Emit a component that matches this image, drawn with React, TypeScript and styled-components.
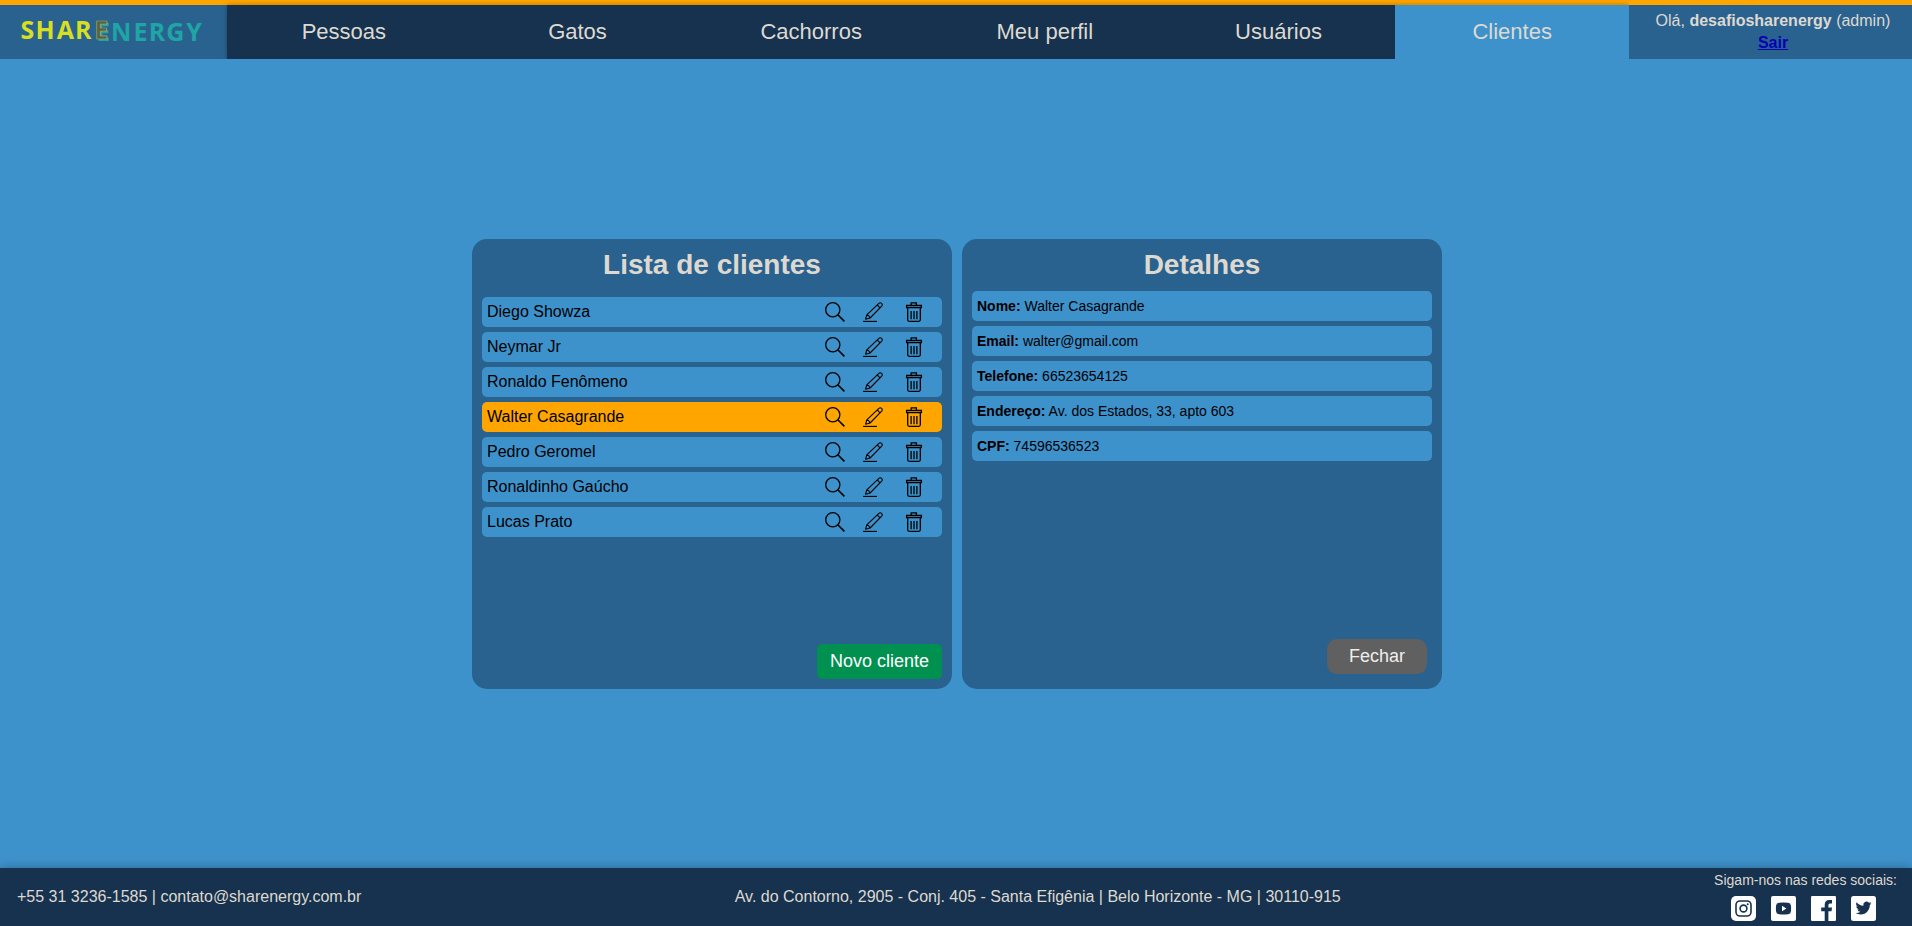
import React from "react";
import styled, { createGlobalStyle } from "styled-components";

const colors = {
  sky: "#3e92cc",
  steel: "#2a628f",
  navy: "#16324f",
  orange: "#ffa500",
  sand: "#ded9d0",
};

const GlobalStyle = createGlobalStyle`
  * { box-sizing: border-box; }
  body {
    margin: 0;
    background: ${colors.sky};
    font-family: "Liberation Sans", Arial, sans-serif;
    font-size: 16px;
    color: #000;
  }
`;

const Page = styled.div`
  display: flex;
  flex-direction: column;
  height: 100vh;
  overflow: hidden;
`;

const Header = styled.header`
  display: flex;
  height: 59px;
  flex: none;
  border-top: 5px solid ${colors.orange};
  color: ${colors.sand};
`;

const LogoBox = styled.div`
  width: 227px;
  background: ${colors.steel};
`;

const Nav = styled.nav`
  flex: 1;
  display: flex;
  background: ${colors.navy};
  box-shadow: 0 0 5px rgba(0, 0, 0, 0.3);
  clip-path: inset(-5px 0 0 -5px);
`;

const NavItem = styled.a<{ $active?: boolean }>`
  flex: 1;
  display: flex;
  align-items: center;
  justify-content: center;
  font-size: 22px;
  background: ${(p) => (p.$active ? colors.sky : "transparent")};
`;

const UserBox = styled.div`
  width: 283px;
  background: ${colors.steel};
  display: flex;
  flex-direction: column;
  align-items: center;
  padding: 5px 0 0 5px;
  line-height: 22px;
`;

const Logout = styled.a`
  color: #0000b4;
  font-weight: bold;
  text-decoration: underline;
`;

const Main = styled.main`
  flex: 1;
  display: flex;
  align-items: center;
  justify-content: center;
  gap: 10px;
  padding: 1px 0 0 2px;
`;

const Panel = styled.section`
  width: 480px;
  height: 450px;
  padding: 10px;
  border-radius: 15px;
  background: ${colors.steel};
  display: flex;
  flex-direction: column;
`;

const Title = styled.h2<{ $gap: number }>`
  margin: 0 0 ${(p) => p.$gap}px;
  height: 32px;
  line-height: 32px;
  font-size: 28px;
  text-align: center;
  color: ${colors.sand};
`;

const List = styled.ul`
  list-style: none;
  margin: 0;
  padding: 0;
  flex: 1;
  display: flex;
  flex-direction: column;
  gap: 5px;
`;

const ClientRow = styled.li<{ $selected?: boolean }>`
  height: 30px;
  padding: 0 18px 0 5px;
  border-radius: 5px;
  background: ${(p) => (p.$selected ? colors.orange : colors.sky)};
  display: flex;
  align-items: center;
`;

const ClientName = styled.span`
  flex: 1;
`;

const Actions = styled.span`
  display: flex;
  gap: 18px;
  svg { display: block; }
  svg:last-child { margin-left: 3px; }
`;

const DetailRow = styled.li`
  height: 30px;
  padding: 0 5px;
  border-radius: 5px;
  background: ${colors.sky};
  font-size: 14px;
  line-height: 30px;
`;

const Button = styled.button<{ $tone: "create" | "close" }>`
  align-self: flex-end;
  height: 35px;
  width: ${(p) => (p.$tone === "create" ? 125 : 100)}px;
  margin: ${(p) => (p.$tone === "create" ? "0" : "0 5px 5px 0")};
  padding: 0;
  border: 0;
  border-radius: ${(p) => (p.$tone === "create" ? 5 : 10)}px;
  background: ${(p) => (p.$tone === "create" ? "#009150" : "#606060")};
  color: ${(p) => (p.$tone === "create" ? "#fff" : "#eee")};
  font: 18px "Liberation Sans", Arial, sans-serif;
`;

const Footer = styled.footer`
  flex: none;
  height: 58px;
  background: ${colors.navy};
  color: ${colors.sand};
  box-shadow: 0 0 10px rgba(0, 0, 0, 0.3);
  display: flex;
  justify-content: space-between;
  align-items: center;
  padding: 0 15px 0 17px;
`;

const Social = styled.div`
  align-self: start;
  padding-top: 4px;
  display: flex;
  flex-direction: column;
  align-items: center;
  gap: 8px;
  font-size: 14px;
  line-height: 16px;
`;

const SocialIcons = styled.div`
  display: flex;
  gap: 15px;
  margin-right: 4px;
  svg { display: block; }
`;

const Logo = () => (
  <svg width="227" height="54" fontFamily='"Open Sans", sans-serif' fontWeight="700" fontSize="25">
    <text x="96.2 111 133.5 148.8 166.2 186.2" y="36" fill="#1fa5a5">ENERGY</text>
    <text x="20.5 35.5 56.7 75 94.2" y="34" fill="#d7df23">
      SHAR<tspan fill="#5a604f" stroke="#9dae4e" strokeWidth="0.7">E</tspan>
    </text>
  </svg>
);

const SearchIcon = () => (
  <svg width="20" height="20" viewBox="0 0 20 20" fill="none" stroke="#000" strokeWidth="1.3">
    <circle cx="7.8" cy="7.8" r="7.1" />
    <path d="M12.8 12.8 19.4 19.4" strokeWidth="1.6" />
  </svg>
);

const PencilIcon = () => (
  <svg width="20" height="20" viewBox="0 0 20 20" fill="none" stroke="#000" strokeWidth="1.1" strokeLinejoin="round">
    <path d="M2.6 17.2 3.8 12.8 15.9 1.3Q17.2 .2 18.6 1.4 19.9 2.8 18.7 4.1L7.1 16ZM3.8 12.8Q6.3 13.4 7.1 16M14.2 2.9 17 5.8" />
    <path d="M0 19.4H14" />
  </svg>
);

const TrashIcon = () => (
  <svg width="20" height="20" viewBox="0 0 20 20" fill="none" stroke="#000" strokeWidth="1.3">
    <path d="M7.2 3.3V.9H12.4V3.3M2.6 3.4H17.4V5.5H2.6ZM3.7 5.5V17.8Q3.7 19.3 5.2 19.3H14.8Q16.3 19.3 16.3 17.8V5.5M7.1 9V17.3M10 9V17.3M12.9 9V17.3" />
  </svg>
);

const InstagramIcon = () => (
  <svg width="25" height="25" viewBox="0 0 25 25" fill="none">
    <rect width="25" height="25" rx="5" fill="#fff" />
    <rect x="5" y="5" width="15" height="15" rx="4" stroke={colors.navy} strokeWidth="1.6" />
    <circle cx="12.5" cy="12.5" r="3.4" stroke={colors.navy} strokeWidth="1.6" />
    <circle cx="16.7" cy="8.3" r="1" fill={colors.navy} />
  </svg>
);

const YoutubeIcon = () => (
  <svg width="25" height="25" viewBox="0 0 25 25">
    <rect width="25" height="25" rx="2" fill="#fff" />
    <path d="M8 6.8Q12.5 6.3 17 6.8 19.7 7 19.9 9.5 20.3 12.5 19.9 15.5 19.7 18 17 18.2 12.5 18.7 8 18.2 5.3 18 5.1 15.5 4.7 12.5 5.1 9.5 5.3 7 8 6.8Z" fill={colors.navy} />
    <path d="M11 9.8 15.4 12.5 11 15.2Z" fill="#fff" />
  </svg>
);

const FacebookIcon = () => (
  <svg width="25" height="25" viewBox="0 0 25 25">
    <rect width="25" height="25" rx="1.2" fill="#fff" />
    <path d="M13.7 25V15.3H10.2V11.5H13.7V8.8Q13.7 4 18.3 4H21V7.6H19Q17.4 7.6 17.4 9.2V11.5H21L20.5 15.3H17.4V25Z" fill={colors.navy} />
  </svg>
);

const TwitterIcon = () => (
  <svg width="25" height="25" viewBox="0 0 25 25">
    <rect width="25" height="25" rx="2.5" fill="#fff" />
    <path transform="translate(4.6 4.2) scale(.66)" d="M24 4.6a10 10 0 0 1-2.8.8 5 5 0 0 0 2.1-2.7 10 10 0 0 1-3.1 1.2 4.9 4.9 0 0 0-8.4 4.5A14 14 0 0 1 1.6 3.2a4.9 4.9 0 0 0 1.6 6.5 5 5 0 0 1-2.3-.6v.1a4.9 4.9 0 0 0 4 4.8 5 5 0 0 1-2.3.1 4.9 4.9 0 0 0 4.6 3.4A9.9 9.9 0 0 1 0 19.5a14 14 0 0 0 7.5 2.2c9.1 0 14-7.5 14-14v-.6A10 10 0 0 0 24 4.6z" fill={colors.navy} />
  </svg>
);

const tabs = ["Pessoas", "Gatos", "Cachorros", "Meu perfil", "Usuários", "Clientes"];

const clients = [
  "Diego Showza",
  "Neymar Jr",
  "Ronaldo Fenômeno",
  "Walter Casagrande",
  "Pedro Geromel",
  "Ronaldinho Gaúcho",
  "Lucas Prato",
];

const details = [
  ["Nome", "Walter Casagrande"],
  ["Email", "walter@gmail.com"],
  ["Telefone", "66523654125"],
  ["Endereço", "Av. dos Estados, 33, apto 603"],
  ["CPF", "74596536523"],
];

export default function App() {
  return (
    <Page>
      <GlobalStyle />
      <Header>
        <LogoBox><Logo /></LogoBox>
        <Nav>
          {tabs.map((tab) => (
            <NavItem key={tab} $active={tab === "Clientes"}>{tab}</NavItem>
          ))}
        </Nav>
        <UserBox>
          <span>Olá, <b>desafiosharenergy</b> (admin)</span>
          <Logout>Sair</Logout>
        </UserBox>
      </Header>
      <Main>
        <Panel>
          <Title $gap={16}>Lista de clientes</Title>
          <List>
            {clients.map((name) => (
              <ClientRow key={name} $selected={name === "Walter Casagrande"}>
                <ClientName>{name}</ClientName>
                <Actions><SearchIcon /><PencilIcon /><TrashIcon /></Actions>
              </ClientRow>
            ))}
          </List>
          <Button $tone="create">Novo cliente</Button>
        </Panel>
        <Panel>
          <Title $gap={10}>Detalhes</Title>
          <List>
            {details.map(([label, value]) => (
              <DetailRow key={label}><b>{label}:</b> {value}</DetailRow>
            ))}
          </List>
          <Button $tone="close">Fechar</Button>
        </Panel>
      </Main>
      <Footer>
        <span>+55 31 3236-1585 | contato@sharenergy.com.br</span>
        <span>Av. do Contorno, 2905 - Conj. 405 - Santa Efigênia | Belo Horizonte - MG | 30110-915</span>
        <Social>
          Sigam-nos nas redes sociais:
          <SocialIcons><InstagramIcon /><YoutubeIcon /><FacebookIcon /><TwitterIcon /></SocialIcons>
        </Social>
      </Footer>
    </Page>
  );
}
